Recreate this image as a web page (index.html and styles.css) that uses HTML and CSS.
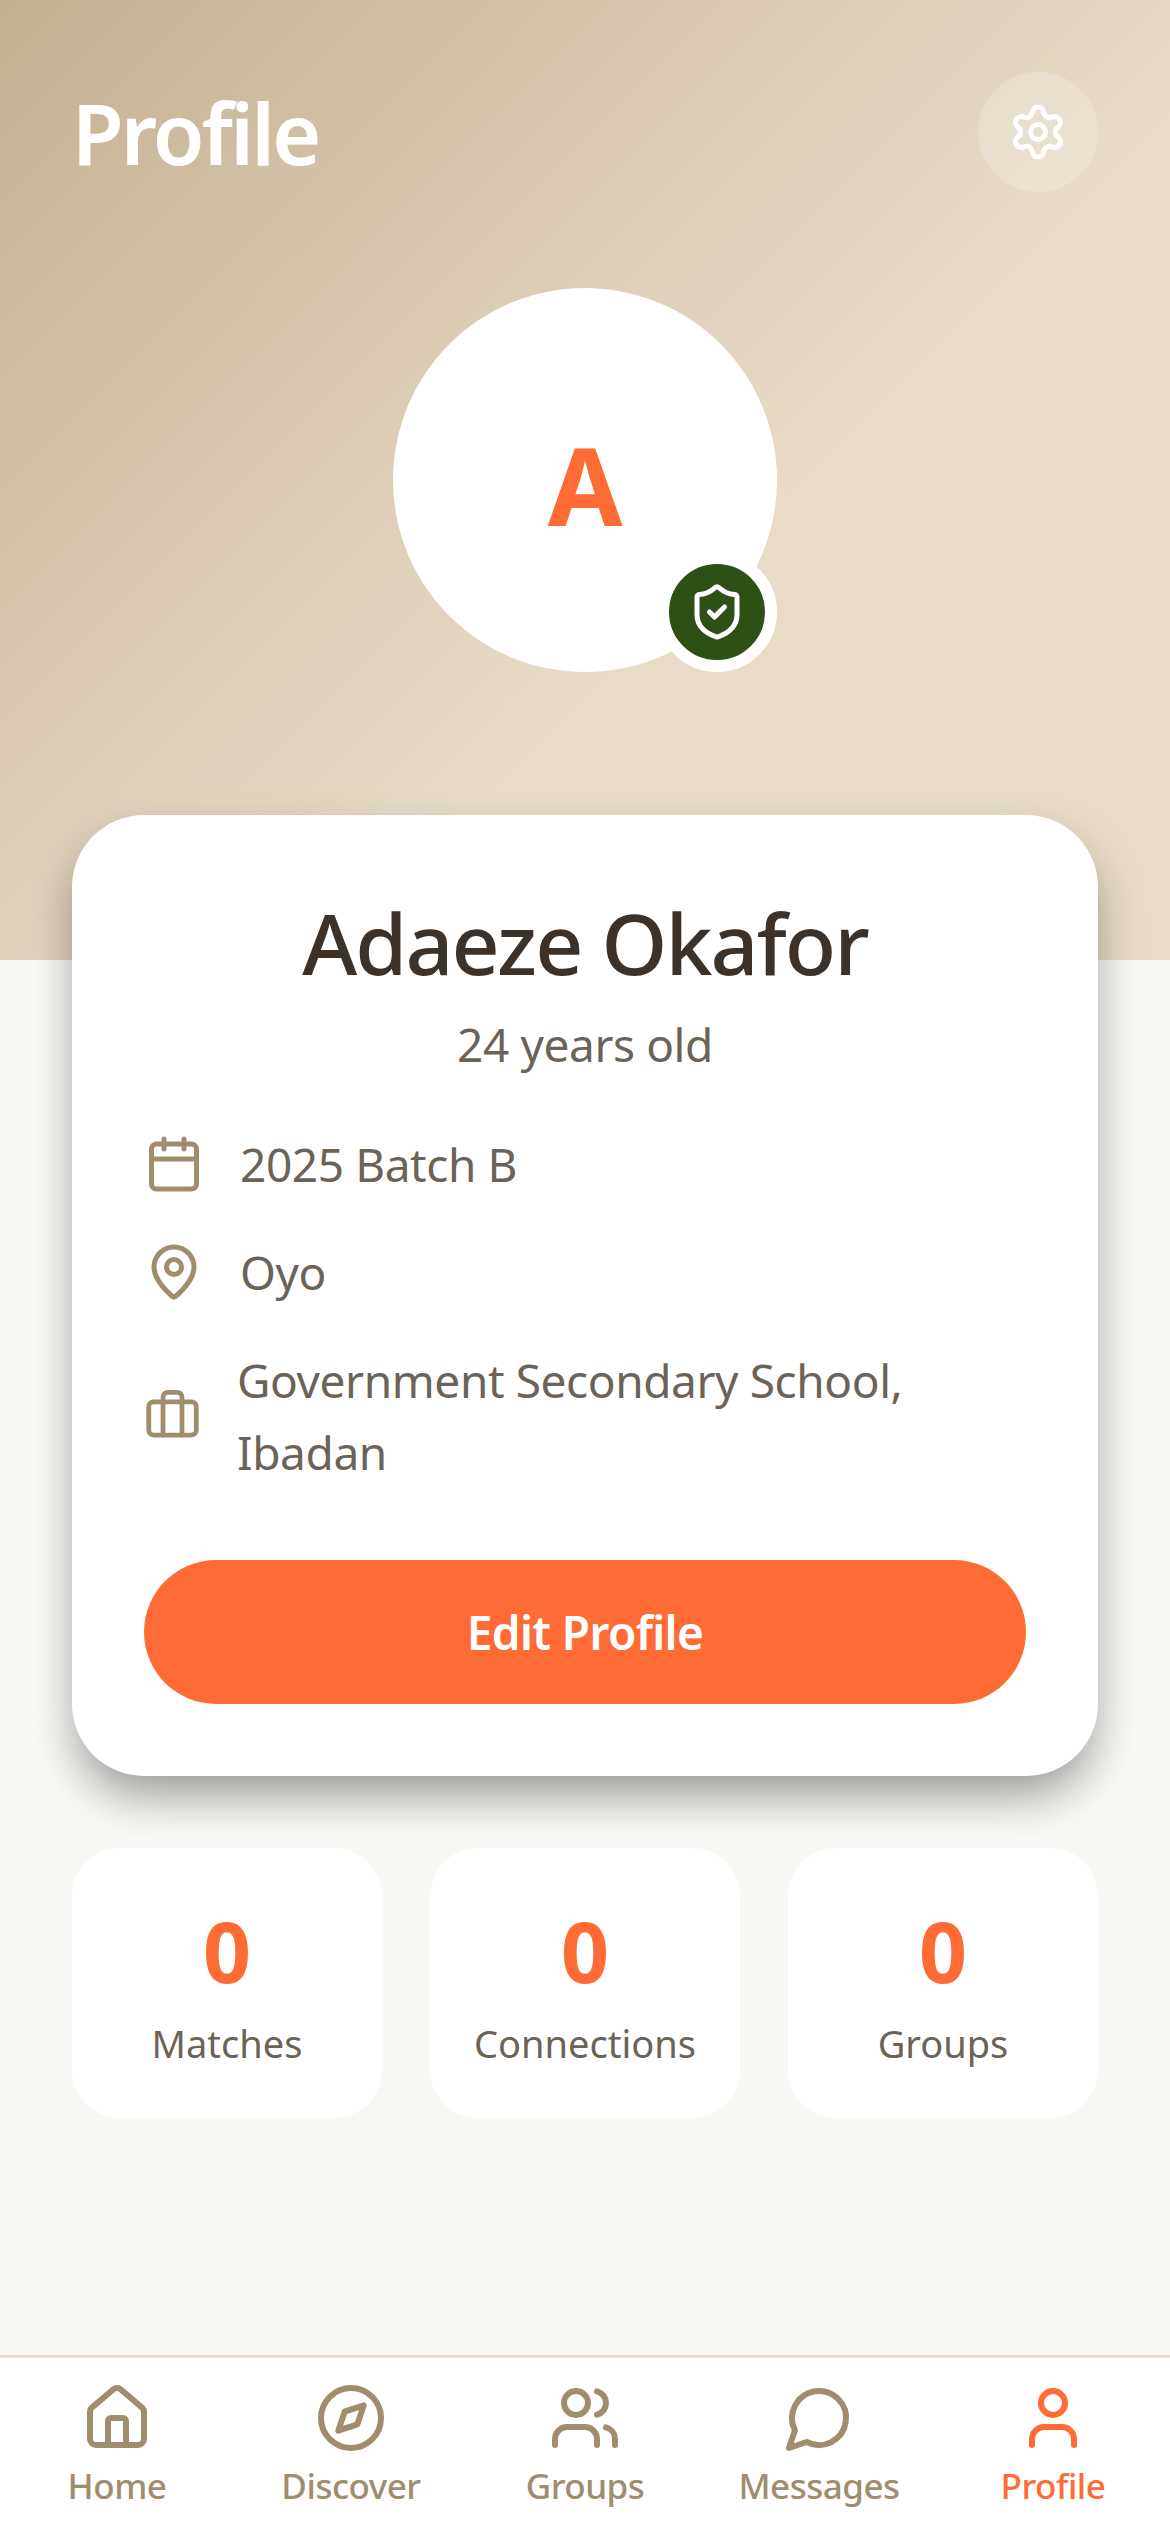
FILE: index.html
```html
<!DOCTYPE html>
<html lang="en">
<head>
    <meta charset="UTF-8">
    <meta name="viewport" content="width=device-width, initial-scale=1.0">
    <title>Profile</title>
    <link rel="stylesheet" href="styles.css">
</head>
<body>
    <div class="screen">
        <header class="hero">
            <div class="hero-top">
                <h1 class="hero-title">Profile</h1>
                <button class="settings-button" aria-label="Settings">
                    <svg class="icon icon-60" viewBox="0 0 24 24"><path d="M9.671 4.136a2.34 2.34 0 0 1 4.659 0 2.34 2.34 0 0 0 3.319 1.915 2.34 2.34 0 0 1 2.33 4.033 2.34 2.34 0 0 0 0 3.831 2.34 2.34 0 0 1-2.33 4.033 2.34 2.34 0 0 0-3.319 1.915 2.34 2.34 0 0 1-4.659 0 2.34 2.34 0 0 0-3.32-1.915 2.34 2.34 0 0 1-2.33-4.033 2.34 2.34 0 0 0 0-3.831A2.34 2.34 0 0 1 6.35 6.051a2.34 2.34 0 0 0 3.319-1.915"/><circle cx="12" cy="12" r="3"/></svg>
                </button>
            </div>
            <div class="avatar">
                <span class="avatar-letter">A</span>
                <span class="verified-badge">
                    <svg class="icon icon-60" viewBox="0 0 24 24"><path d="M20 13c0 5-3.5 7.5-7.66 8.95a1 1 0 0 1-.67-.01C7.5 20.5 4 18 4 13V6a1 1 0 0 1 1-1c2 0 4.5-1.2 6.24-2.72a1.17 1.17 0 0 1 1.52 0C14.51 3.81 17 5 19 5a1 1 0 0 1 1 1z"/><path d="m9 12 2 2 4-4"/></svg>
                </span>
            </div>
        </header>

        <main class="content">
            <section class="profile-card">
                <h2 class="profile-name">Adaeze Okafor</h2>
                <p class="profile-age">24 years old</p>
                <ul class="detail-list">
                    <li class="detail-row">
                        <svg class="icon icon-60 detail-icon" viewBox="0 0 24 24"><path d="M8 2v4"/><path d="M16 2v4"/><rect x="3" y="4" width="18" height="18" rx="2"/><path d="M3 10h18"/></svg>
                        <span>2025 Batch B</span>
                    </li>
                    <li class="detail-row">
                        <svg class="icon icon-60 detail-icon" viewBox="0 0 24 24"><path d="M20 10c0 4.993-5.539 10.193-7.399 11.799a1 1 0 0 1-1.202 0C9.539 20.193 4 14.993 4 10a8 8 0 0 1 16 0"/><circle cx="12" cy="10" r="3"/></svg>
                        <span>Oyo</span>
                    </li>
                    <li class="detail-row">
                        <svg class="icon icon-60 detail-icon detail-icon-narrow" viewBox="0 0 24 24"><path d="M16 20V4a2 2 0 0 0-2-2h-4a2 2 0 0 0-2 2v16"/><rect x="2" y="6" width="20" height="14" rx="2"/></svg>
                        <span>Government Secondary School, Ibadan</span>
                    </li>
                </ul>
                <button class="edit-button">Edit Profile</button>
            </section>

            <section class="stats">
                <div class="stat-card">
                    <div class="stat-value">0</div>
                    <div class="stat-label">Matches</div>
                </div>
                <div class="stat-card">
                    <div class="stat-value">0</div>
                    <div class="stat-label">Connections</div>
                </div>
                <div class="stat-card">
                    <div class="stat-value">0</div>
                    <div class="stat-label">Groups</div>
                </div>
            </section>
        </main>

        <nav class="bottom-nav">
            <a class="nav-item" href="#">
                <svg class="icon icon-72" viewBox="0 0 24 24"><path d="M15 21v-8a1 1 0 0 0-1-1h-4a1 1 0 0 0-1 1v8"/><path d="M3 10a2 2 0 0 1 .709-1.528l7-5.999a2 2 0 0 1 2.582 0l7 5.999A2 2 0 0 1 21 10v9a2 2 0 0 1-2 2H5a2 2 0 0 1-2-2z"/></svg>
                <span>Home</span>
            </a>
            <a class="nav-item" href="#">
                <svg class="icon icon-72" viewBox="0 0 24 24"><circle cx="12" cy="12" r="10"/><path d="m16.24 7.76-2.12 6.36-6.36 2.12 2.12-6.36 6.36-2.12z"/></svg>
                <span>Discover</span>
            </a>
            <a class="nav-item" href="#">
                <svg class="icon icon-72" viewBox="0 0 24 24"><path d="M16 21v-2a4 4 0 0 0-4-4H6a4 4 0 0 0-4 4v2"/><circle cx="9" cy="7" r="4"/><path d="M22 21v-2a4 4 0 0 0-3-3.87"/><path d="M16 3.13a4 4 0 0 1 0 7.75"/></svg>
                <span>Groups</span>
            </a>
            <a class="nav-item" href="#">
                <svg class="icon icon-72" viewBox="0 0 24 24"><path d="M7.9 20A9 9 0 1 0 4 16.1L2 22Z"/></svg>
                <span>Messages</span>
            </a>
            <a class="nav-item active" href="#">
                <svg class="icon icon-72" viewBox="0 0 24 24"><path d="M19 21v-2a4 4 0 0 0-4-4H9a4 4 0 0 0-4 4v2"/><circle cx="12" cy="7" r="4"/></svg>
                <span>Profile</span>
            </a>
        </nav>
    </div>
</body>
</html>
```

FILE: styles.css
```css
* {
    box-sizing: border-box;
}

body {
    margin: 0;
    font-family: "Noto Sans", "Open Sans", sans-serif;
    background-color: #faf8f5;
}

.screen {
    height: 2532px;
    display: flex;
    flex-direction: column;
    overflow: hidden;
}

.icon {
    fill: none;
    stroke: currentColor;
    stroke-width: 2;
    stroke-linecap: round;
    stroke-linejoin: round;
    flex-shrink: 0;
}

.icon-60 {
    width: 60px;
    height: 60px;
}

.icon-72 {
    width: 72px;
    height: 72px;
}

/* top area */
.hero {
    height: 960px;
    flex-shrink: 0;
    padding: 72px 72px 0;
    background: linear-gradient(135deg, #c4b091 0%, #e8dcc8 60%, #e8dcc8 100%);
}

.hero-top {
    display: flex;
    justify-content: space-between;
    align-items: center;
    height: 120px;
}

.hero-title {
    margin: 0;
    font-size: 84px;
    font-weight: 600;
    letter-spacing: -2.8px;
    color: #fff;
}

.settings-button {
    width: 120px;
    height: 120px;
    padding: 0;
    border: none;
    border-radius: 50%;
    color: #fff;
    background-color: rgba(255, 255, 255, 0.2);
    display: flex;
    align-items: center;
    justify-content: center;
}

.avatar {
    position: relative;
    width: 384px;
    height: 384px;
    margin: 96px auto 0;
    border-radius: 50%;
    background-color: #fff;
    display: flex;
    align-items: center;
    justify-content: center;
}

.avatar-letter {
    padding-top: 8px;
    font-size: 108px;
    font-weight: 700;
    color: #ff6b35;
}

.verified-badge {
    position: absolute;
    right: 0;
    bottom: 0;
    width: 120px;
    height: 120px;
    border: 12px solid #fff;
    border-radius: 50%;
    color: #fff;
    background-color: #2d5016;
    display: flex;
    align-items: center;
    justify-content: center;
}

/* main content */
.content {
    flex: 1;
    padding: 0 72px;
}

.profile-card {
    position: relative;
    margin-top: -145px;
    padding: 74px 72px 72px;
    border-radius: 72px;
    background-color: #fff;
    box-shadow: 0 24px 48px -6px rgba(0, 0, 0, 0.4);
}

.profile-name {
    margin: 0;
    font-size: 84px;
    line-height: 108px;
    font-weight: 500;
    letter-spacing: -1.9px;
    text-align: center;
    color: #3d3229;
}

.profile-age {
    margin: 11px 0 0;
    font-size: 46px;
    line-height: 72px;
    letter-spacing: -0.4px;
    text-align: center;
    color: #6b6358;
}

.detail-list {
    margin: 48px 0 0;
    padding: 0;
    list-style: none;
}

.detail-row {
    display: flex;
    align-items: center;
    gap: 36px;
    margin-bottom: 36px;
    font-size: 46px;
    line-height: 72px;
    letter-spacing: -0.4px;
    color: #6b6358;
}

.detail-icon {
    color: #a08d6d;
}

.detail-icon-narrow {
    width: 57px;
}

.edit-button {
    width: 100%;
    height: 144px;
    margin-top: 36px;
    border: none;
    border-radius: 72px;
    font-family: inherit;
    font-size: 46px;
    font-weight: 600;
    letter-spacing: -0.6px;
    color: #fff;
    background-color: #ff6b35;
}

.stats {
    display: grid;
    grid-template-columns: repeat(3, 1fr);
    gap: 48px;
    margin-top: 72px;
}

.stat-card {
    height: 270px;
    padding: 48px 12px 0;
    border-radius: 48px;
    background-color: #fff;
    text-align: center;
}

.stat-value {
    font-size: 84px;
    line-height: 110px;
    font-weight: 700;
    color: #ff6b35;
}

.stat-label {
    margin-top: 7px;
    font-size: 38px;
    line-height: 60px;
    color: #6b6358;
}

/* bottom nav */
.bottom-nav {
    flex-shrink: 0;
    height: 177px;
    border-top: 3px solid #e8dcc8;
    padding-top: 24px;
    background-color: #fff;
    display: grid;
    grid-template-columns: repeat(5, 1fr);
}

.nav-item {
    display: flex;
    flex-direction: column;
    align-items: center;
    gap: 8px;
    font-size: 35px;
    line-height: 48px;
    font-weight: 500;
    letter-spacing: -0.5px;
    text-decoration: none;
    color: #a08d6d;
}

.nav-item.active {
    color: #ff6b35;
}
```
